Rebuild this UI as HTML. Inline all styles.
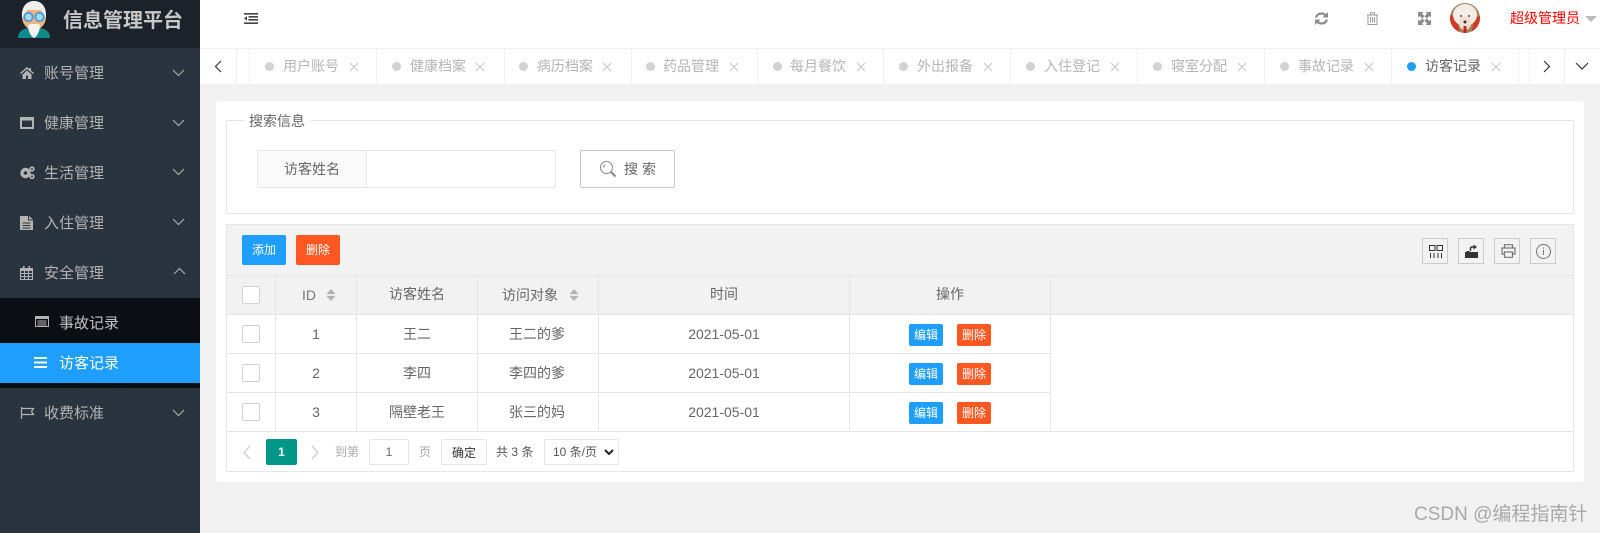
<!DOCTYPE html>
<html lang="zh">
<head>
<meta charset="utf-8">
<title>信息管理平台</title>
<style>
html,body{margin:0;padding:0;width:1600px;height:533px;overflow:hidden;background:#f1f1f1;font-family:"Liberation Sans","Noto Sans CJK SC",sans-serif;color:#666}
.a{position:absolute;box-sizing:border-box}
.t{position:absolute;white-space:nowrap;font-size:14px;line-height:20px}
.c{position:absolute;text-align:center;white-space:nowrap;font-size:14px;color:#666}
svg{position:absolute;overflow:visible}
.m{color:#b4b4b4;font-size:15px;left:44px}
.tabsep{position:absolute;top:49px;width:1px;height:35px;background:#f1f1f1}
.dot{position:absolute;top:62px;width:9px;height:9px;border-radius:50%;background:#d2d2d2}
.tt{position:absolute;top:56px;font-size:14px;line-height:20px;color:#b6b6b6;white-space:nowrap}
.tx{position:absolute;top:62px;width:9px;height:9px}
.cb{position:absolute;left:242px;width:18px;height:18px;background:#fff;border:1px solid #d2d2d2;border-radius:2px;box-sizing:border-box}
.hl{position:absolute;height:1px;background:#e6e6e6}
.vl{position:absolute;width:1px;background:#e6e6e6}
.btn{position:absolute;text-align:center;color:#fff;border-radius:2px;white-space:nowrap}
.ib{position:absolute;top:238px;width:26px;height:26px;border:1px solid #ccc;box-sizing:border-box}
</style>
</head>
<body>
<!-- sidebar -->
<div class="a" style="left:0;top:0;width:200px;height:533px;background:#2a343f"></div>
<div class="a" style="left:0;top:0;width:200px;height:48px;background:#1b222a"></div>
<svg style="left:18px;top:0" width="32" height="38" viewBox="0 0 32 38">
<path d="M0 38c0-6 4-9 10-10h12c6 1 10 4 10 10z" fill="#0f8a8a"/>
<ellipse cx="16" cy="17" rx="12" ry="13" fill="#f0b67f"/>
<path d="M4 18C3 6 9 1 16 1s13 5 12 17l-3-4c-1-3-2-4-3-4H10c-1 0-2 1-3 4z" fill="#eee"/>
<path d="M10 25c2-1 4-1 6-1s4 0 6 1c0 6-3 12-6 13-3-1-6-7-6-13z" fill="#f4f4f4"/>
<circle cx="10.500" cy="17" r="4.200" fill="#a5dcf2" stroke="#4a9ad8" stroke-width="1.800"/>
<circle cx="21.500" cy="17" r="4.200" fill="#a5dcf2" stroke="#4a9ad8" stroke-width="1.800"/>
</svg>
<div class="t" style="left:63px;top:7px;font-size:20px;line-height:28px;font-weight:700;color:#c8c8c8">信息管理平台</div>

<svg style="left:20px;top:67px" width="14" height="12" viewBox="0 0 14 12"><path d="M7 0L0 6l1 1 6-5 6 5 1-1-3-2.500V1H9.500v1.300zM2.500 7.500V12H6V8.500h2V12h3.500V7.500L7 3.500z" fill="#b4b4b4"/></svg>
<div class="t m" style="top:64px">账号管理</div>
<svg style="left:20px;top:117px" width="14" height="12" viewBox="0 0 14 12"><path d="M0 0h14v12H0zM2 3.500v6.500h10V3.500z" fill="#b4b4b4" fill-rule="evenodd"/></svg>
<div class="t m" style="top:114px">健康管理</div>
<svg style="left:20px;top:166px" width="15" height="13" viewBox="0 0 15 13"><circle cx="5.500" cy="7" r="3.500" fill="none" stroke="#b4b4b4" stroke-width="3.400"/><circle cx="12" cy="3" r="1.800" fill="none" stroke="#b4b4b4" stroke-width="1.700"/><circle cx="12" cy="10.500" r="1.800" fill="none" stroke="#b4b4b4" stroke-width="1.700"/></svg>
<div class="t m" style="top:164px">生活管理</div>
<svg style="left:20px;top:216px" width="13" height="14" viewBox="0 0 13 14"><path d="M0 0h8v4.500h5V14H0zM9 0l4 3.500H9zM2.500 6.500v1h8v-1zm0 2.500v1h8V9zm0 2.500v1h8v-1z" fill="#b4b4b4" fill-rule="evenodd"/></svg>
<div class="t m" style="top:214px">入住管理</div>
<svg style="left:20px;top:266px" width="13" height="14" viewBox="0 0 13 14"><path d="M0 2h13v12H0zM1 5h3v2H1zm4 0h3v2H5zm4 0h3v2H9zM1 8h3v2H1zm4 0h3v2H5zm4 0h3v2H9zM1 11h3v2H1zm4 0h3v2H5zm4 0h3v2H9z" fill="#b4b4b4" fill-rule="evenodd"/><path d="M3 0h1.500v3H3zM8.500 0H10v3H8.500z" fill="#b4b4b4"/></svg>
<div class="t m" style="top:264px">安全管理</div>
<div class="a" style="left:0;top:298px;width:200px;height:90px;background:#0b0f14"></div>
<svg style="left:35px;top:316px" width="14" height="11" viewBox="0 0 14 11"><path d="M0 0h14v11H0zM1 3v7h12V3zM2.500 4.500h9v1h-9zm0 2h9v1h-9zm0 2h9v1h-9z" fill="#b4b4b4" fill-rule="evenodd"/></svg>
<div class="t" style="left:59px;top:314px;font-size:15px;color:#c2c2c2">事故记录</div>
<div class="a" style="left:0;top:343px;width:200px;height:40px;background:#1e9fff"></div>
<svg style="left:34px;top:357px" width="14" height="11" viewBox="0 0 14 11"><path d="M0 0h13v2H0zM0 4.500h13v2H0zM0 9h13v2H0z" fill="#fff"/></svg>
<div class="t" style="left:59px;top:354px;font-size:15px;color:#fff">访客记录</div>
<svg style="left:20px;top:407px" width="15" height="12" viewBox="0 0 15 12"><path d="M1.500 0v12M1.500 1.500h12l-2 3 2 3h-12" fill="none" stroke="#b4b4b4" stroke-width="1.200"/></svg>
<div class="t m" style="top:404px">收费标准</div>
<svg style="left:171.500px;top:0" width="20" height="430" viewBox="0 0 20 430" fill="none" stroke="#a8a8a8" stroke-width="1.200">
<path d="M1 70l5.500 5.500L12 70M1 120l5.500 5.500L12 120M1 169l5.500 5.500L12 169M1 219l5.500 5.500L12 219M2 274l5.500-5.500L13 274M1 410l5.500 5.500L12 410"/>
</svg>

<!-- topbar -->
<div class="a" style="left:200px;top:0;width:1400px;height:48px;background:#fff"></div>
<svg style="left:244px;top:13px" width="14" height="11" viewBox="0 0 14 11" fill="#444"><path d="M0 0h14v1.600H0zM4.500 3h9.500v1.600H4.500zM4.500 6h9.500v1.600H4.500zM0 9.400h14V11H0zM3 3v4.700L0 5.300z"/></svg>
<svg style="left:1315px;top:12px" width="13" height="13" viewBox="0 0 13 13" fill="none" stroke="#8c8c8c" stroke-width="2.200"><path d="M1 5.500C2 2.500 4 1.500 6.500 1.500c2 0 3.500 1 4.500 2.500M12 7.500c-1 3-3 4-5.500 4-2 0-3.500-1-4.500-2.500"/><path d="M13 0v5.500H7.500zM0 13V7.500h5.500z" fill="#8c8c8c" stroke="none"/></svg>
<svg style="left:1367px;top:12px" width="11" height="13" viewBox="0 0 11 13" fill="none" stroke="#9a9a9a" stroke-width="1"><path d="M0 3h11M3.500 3V.8h4V3M1 3v9.500h9V3M3.500 5v5.500M5.500 5v5.500M7.500 5v5.500"/></svg>
<svg style="left:1418px;top:12px" width="13" height="13" viewBox="0 0 13 13" fill="#8c8c8c"><path d="M0 0h5.500L4 1.500 6.500 4.300 4.300 6.500 1.500 4 0 5.500zM13 0v5.500L11.500 4 8.700 6.500 6.500 4.300 9 1.500 7.500 0zM0 13V7.500L1.500 9l2.800-2.500 2.200 2.200L4 11.500 5.500 13zM13 13H7.500L9 11.500 6.500 8.700l2.200-2.200L11.500 9 13 7.500z"/></svg>
<svg style="left:1450px;top:3px" width="30" height="30" viewBox="0 0 30 30">
<defs><clipPath id="av"><circle cx="15" cy="15" r="15"/></clipPath></defs>
<g clip-path="url(#av)"><rect width="30" height="30" fill="#a9825f"/><path d="M0 12l6 2 4 16H0zM30 13l-5 1-4 16h9z" fill="#cf3a24"/><ellipse cx="15" cy="12" rx="12" ry="11" fill="#f5ece6"/><ellipse cx="15" cy="20" rx="6" ry="7" fill="#efdfd5"/><circle cx="15" cy="19" r="1.500" fill="#4a2a22"/><circle cx="11" cy="13" r="1" fill="#6a4a3a"/><circle cx="19" cy="13" r="1" fill="#6a4a3a"/><rect x="13.500" y="23" width="3" height="7" fill="#c0281e"/></g>
</svg>
<div class="t" style="left:1510px;top:8px;color:#f00;font-size:14px">超级管理员</div>
<div class="a" style="left:1585px;top:16px;width:0;height:0;border-left:6px solid transparent;border-right:6px solid transparent;border-top:6px solid #bbb"></div>

<!-- tabs -->
<div class="a" style="left:200px;top:48px;width:1400px;height:36px;background:#fff;border-top:1px solid #f1f1f1"></div>
<div class="tabsep" style="left:236px"></div><div class="tabsep" style="left:249px"></div>
<div class="tabsep" style="left:376px"></div><div class="tabsep" style="left:504px"></div><div class="tabsep" style="left:631px"></div><div class="tabsep" style="left:757px"></div><div class="tabsep" style="left:883px"></div><div class="tabsep" style="left:1010px"></div><div class="tabsep" style="left:1137px"></div><div class="tabsep" style="left:1264px"></div><div class="tabsep" style="left:1391px"></div><div class="tabsep" style="left:1518px"></div><div class="tabsep" style="left:1529px"></div><div class="tabsep" style="left:1564px"></div>
<svg style="left:0;top:0" width="1600" height="84" fill="none" stroke="#333" stroke-width="1.200"><path d="M221 61l-5.500 5.500 5.500 5.500M1544 61l5.500 5.500-5.500 5.500M1576 63l6 6 6-6"/></svg>
<div class="dot" style="left:265px"></div><div class="tt" style="left:283px">用户账号</div>
<div class="dot" style="left:392px"></div><div class="tt" style="left:410px">健康档案</div>
<div class="dot" style="left:519px"></div><div class="tt" style="left:537px">病历档案</div>
<div class="dot" style="left:646px"></div><div class="tt" style="left:663px">药品管理</div>
<div class="dot" style="left:773px"></div><div class="tt" style="left:790px">每月餐饮</div>
<div class="dot" style="left:899px"></div><div class="tt" style="left:917px">外出报备</div>
<div class="dot" style="left:1026px"></div><div class="tt" style="left:1044px">入住登记</div>
<div class="dot" style="left:1153px"></div><div class="tt" style="left:1171px">寝室分配</div>
<div class="dot" style="left:1280px"></div><div class="tt" style="left:1298px">事故记录</div>
<div class="dot" style="left:1407px;background:#1e9fff"></div><div class="tt" style="left:1425px;color:#666">访客记录</div>
<svg style="left:0;top:0" width="1600" height="84" fill="none" stroke="#c4c4c4" stroke-width="1"><path d="M350 63l8 8m0-8l-8 8M476 63l8 8m0-8l-8 8M603 63l8 8m0-8l-8 8M730 63l8 8m0-8l-8 8M857 63l8 8m0-8l-8 8M984 63l8 8m0-8l-8 8M1111 63l8 8m0-8l-8 8M1238 63l8 8m0-8l-8 8M1365 63l8 8m0-8l-8 8M1492 63l8 8m0-8l-8 8"/></svg>

<!-- panel -->
<div class="a" style="left:216px;top:101px;width:1368px;height:381px;background:#fff;border-radius:3px"></div>
<div class="a" style="left:226px;top:120px;width:1348px;height:94px;border:1px solid #e6e6e6"></div>
<div class="t" style="left:244px;top:111px;padding:0 5px;background:#fff;color:#666">搜索信息</div>
<div class="a" style="left:257px;top:150px;width:299px;height:38px;border:1px solid #e6e6e6;border-radius:2px"></div>
<div class="c" style="left:258px;top:151px;width:108px;height:36px;line-height:36px;background:#fafafa;border-right:1px solid #e6e6e6">访客姓名</div>
<div class="a" style="left:580px;top:150px;width:95px;height:38px;border:1px solid #c9c9c9;border-radius:2px"></div>
<svg style="left:600px;top:161px" width="17" height="17" viewBox="0 0 17 17" fill="none" stroke="#888"><circle cx="6.500" cy="6.500" r="6"/><path d="M11 11l4.500 4.500" stroke-width="2"/><path d="M3.500 6.500c0-1 .5-2 1.500-2.500"/></svg>
<div class="t" style="left:624px;top:159px;color:#666;letter-spacing:4px">搜索</div>

<!-- table -->
<div class="a" style="left:226px;top:224px;width:1348px;height:248px;border:1px solid #e6e6e6"></div>
<div class="a" style="left:227px;top:225px;width:1346px;height:89px;background:#f2f2f2"></div>
<div class="btn" style="left:242px;top:235px;width:44px;height:30px;line-height:30px;background:#1e9fff;font-size:12px">添加</div>
<div class="btn" style="left:296px;top:235px;width:44px;height:30px;line-height:30px;background:#ff5722;font-size:12px">删除</div>
<div class="ib" style="left:1422px"></div><div class="ib" style="left:1458px"></div><div class="ib" style="left:1494px"></div><div class="ib" style="left:1530px"></div>
<svg style="left:1429px;top:245px" width="14" height="13" viewBox="0 0 14 13" fill="none" stroke="#333" stroke-width="1"><path d="M.5.500h5.500v5H.5zM8 .5h5.500v5H8zM1.500 8v5M5 8v5M9 8v5M12.500 8v5"/></svg>
<svg style="left:1465px;top:244px" width="13" height="14" viewBox="0 0 13 14"><path d="M0 8h1.500V7h3v1h8.500v6H0z" fill="#333"/><path d="M5.500 7V4.500c0-1 .8-1.500 2-1.500H9" fill="none" stroke="#333" stroke-width="1.400"/><path d="M8.500 0.500L12 3 8.500 5.500z" fill="#333"/></svg>
<svg style="left:1501px;top:244px" width="15" height="14" viewBox="0 0 15 14" fill="none" stroke="#777" stroke-width="1.200"><path d="M3.500 4V.7h8V4M3.500 10H1V4h13v6h-2.500M3.500 8h8v5.300h-8z"/></svg>
<svg style="left:1536px;top:244px" width="15" height="15" viewBox="0 0 15 15" fill="none" stroke="#777" stroke-width="1"><circle cx="7.500" cy="7.500" r="7"/><path d="M7.500 6v5M7.500 3.500v1.200"/></svg>

<div class="hl" style="left:227px;top:275px;width:1346px"></div>
<div class="hl" style="left:227px;top:314px;width:1346px"></div>
<div class="hl" style="left:227px;top:353px;width:823px"></div>
<div class="hl" style="left:227px;top:392px;width:823px"></div>
<div class="hl" style="left:227px;top:431px;width:1346px"></div>
<div class="vl" style="left:275px;top:275px;height:156px"></div>
<div class="vl" style="left:356px;top:275px;height:156px"></div>
<div class="vl" style="left:477px;top:275px;height:156px"></div>
<div class="vl" style="left:598px;top:275px;height:156px"></div>
<div class="vl" style="left:849px;top:275px;height:156px"></div>
<div class="vl" style="left:1050px;top:275px;height:156px"></div>

<div class="cb" style="top:286px"></div><div class="cb" style="top:325px"></div><div class="cb" style="top:364px"></div><div class="cb" style="top:403px"></div>

<div class="t" style="left:302px;top:285px;color:#777;font-size:14px">ID</div>
<svg style="left:326px;top:289px" width="10" height="12" viewBox="0 0 10 13" fill="#b2b2b2"><path d="M5 0l5 5.500H0zM0 7.500h10L5 13z"/></svg>
<div class="c" style="left:357px;top:275px;width:120px;line-height:39px">访客姓名</div>
<div class="t" style="left:502px;top:285px;color:#666">访问对象</div>
<svg style="left:569px;top:289px" width="10" height="12" viewBox="0 0 10 13" fill="#b2b2b2"><path d="M5 0l5 5.500H0zM0 7.500h10L5 13z"/></svg>
<div class="c" style="left:599px;top:275px;width:250px;line-height:39px">时间</div>
<div class="c" style="left:850px;top:275px;width:200px;line-height:39px">操作</div>

<div class="c" style="left:276px;top:315px;width:80px;line-height:39px">1</div>
<div class="c" style="left:357px;top:315px;width:120px;line-height:39px">王二</div>
<div class="c" style="left:477px;top:315px;width:120px;line-height:39px">王二的爹</div>
<div class="c" style="left:599px;top:315px;width:250px;line-height:39px">2021-05-01</div>
<div class="btn" style="left:909px;top:324px;width:34px;height:22px;line-height:22px;background:#1e9fff;font-size:12px">编辑</div>
<div class="btn" style="left:957px;top:324px;width:34px;height:22px;line-height:22px;background:#ff5722;font-size:12px">删除</div>

<div class="c" style="left:276px;top:354px;width:80px;line-height:39px">2</div>
<div class="c" style="left:357px;top:354px;width:120px;line-height:39px">李四</div>
<div class="c" style="left:477px;top:354px;width:120px;line-height:39px">李四的爹</div>
<div class="c" style="left:599px;top:354px;width:250px;line-height:39px">2021-05-01</div>
<div class="btn" style="left:909px;top:363px;width:34px;height:22px;line-height:22px;background:#1e9fff;font-size:12px">编辑</div>
<div class="btn" style="left:957px;top:363px;width:34px;height:22px;line-height:22px;background:#ff5722;font-size:12px">删除</div>

<div class="c" style="left:276px;top:393px;width:80px;line-height:39px">3</div>
<div class="c" style="left:357px;top:393px;width:120px;line-height:39px">隔壁老王</div>
<div class="c" style="left:477px;top:393px;width:120px;line-height:39px">张三的妈</div>
<div class="c" style="left:599px;top:393px;width:250px;line-height:39px">2021-05-01</div>
<div class="btn" style="left:909px;top:402px;width:34px;height:22px;line-height:22px;background:#1e9fff;font-size:12px">编辑</div>
<div class="btn" style="left:957px;top:402px;width:34px;height:22px;line-height:22px;background:#ff5722;font-size:12px">删除</div>

<!-- pagination -->
<svg style="left:0;top:0" width="400" height="480" fill="none" stroke="#d2d2d2" stroke-width="1.500"><path d="M250 446l-6 6.500 6 6.500M312 446l6 6.500-6 6.500"/></svg>
<div class="btn" style="left:266px;top:439px;width:31px;height:26px;line-height:26px;background:#009688;font-size:12px;font-weight:700">1</div>
<div class="t" style="left:335px;top:442px;font-size:12px;color:#aaa">到第</div>
<div class="c" style="left:369px;top:439px;width:40px;height:26px;line-height:24px;border:1px solid #e6e6e6;box-sizing:border-box;font-size:12px;border-radius:2px">1</div>
<div class="t" style="left:419px;top:442px;font-size:12px;color:#aaa">页</div>
<div class="c" style="left:441px;top:439px;width:46px;height:26px;line-height:26px;border:1px solid #e6e6e6;box-sizing:border-box;font-size:12px;color:#333;border-radius:2px">确定</div>
<div class="t" style="left:496px;top:442px;font-size:12px;color:#555">共 3 条</div>
<div class="a" style="left:544px;top:439px;width:75px;height:26px;border:1px solid #e6e6e6;border-radius:2px"></div>
<div class="t" style="left:553px;top:442px;font-size:12px;color:#555">10 条/页</div>
<svg style="left:604px;top:449px" width="10" height="7" viewBox="0 0 10 7" fill="none" stroke="#222" stroke-width="2"><path d="M1 1l4 4 4-4"/></svg>

<div class="t" style="left:1414px;top:503px;font-size:19px;line-height:24px;color:#a8a8a8">CSDN @编程指南针</div>
</body>
</html>
